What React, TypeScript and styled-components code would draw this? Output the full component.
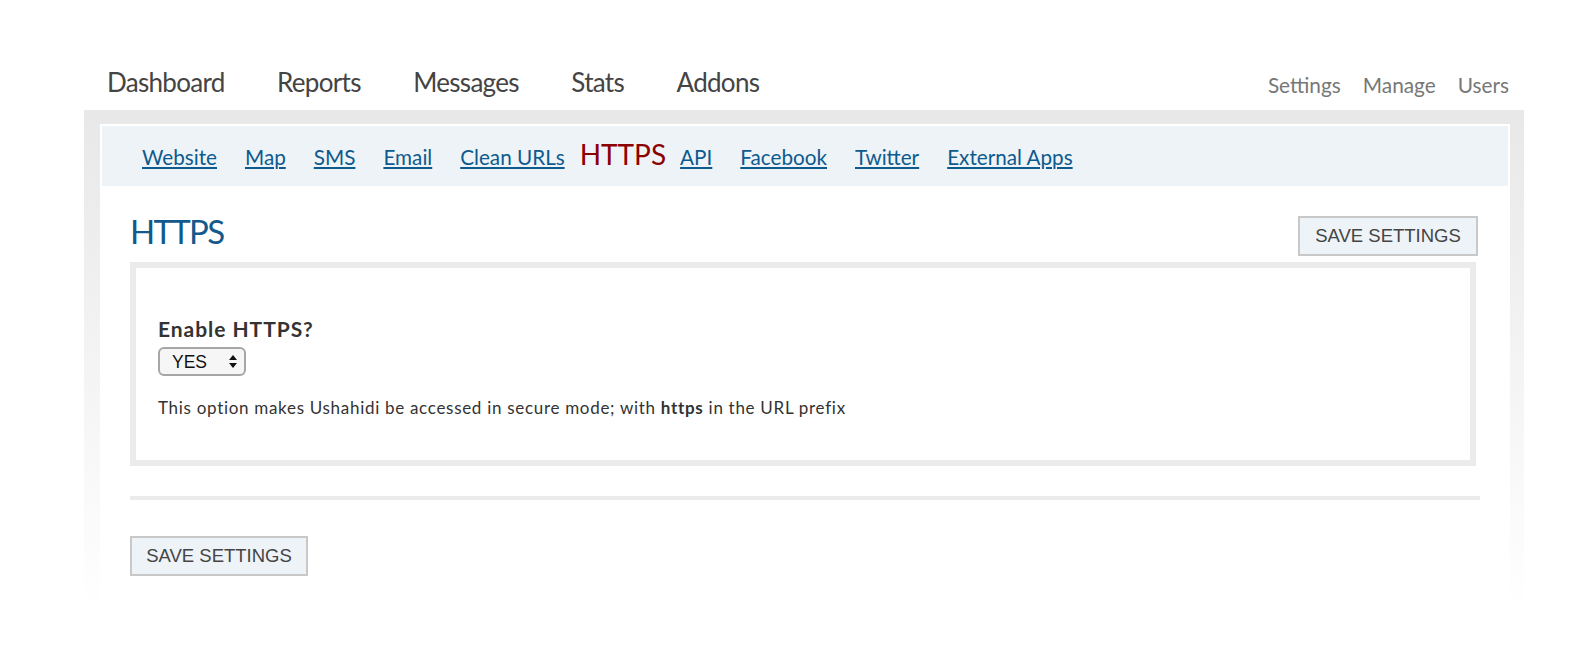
import React from "react";
import styled, { createGlobalStyle } from "styled-components";

const GlobalStyle = createGlobalStyle`
  html, body { margin: 0; padding: 0; background: #fff; }
  body { font-family: Lato, "Liberation Sans", sans-serif; color: #333; }
`;

const Page = styled.div`
  width: 1440px;
  margin-left: 84px;
  padding-top: 67px;
`;

const TopBar = styled.header`
  display: flex;
  justify-content: space-between;
  align-items: flex-end;
  padding: 0 15px 13px 23px;
`;

const MainNav = styled.nav`
  display: flex;
  gap: 52.5px;
`;

const MainLink = styled.a`
  font-size: 26px;
  line-height: 30px;
  letter-spacing: -0.7px;
  color: #444;
  text-decoration: none;
`;

const UtilNav = styled.nav`
  display: flex;
  gap: 22px;
`;

const UtilLink = styled.a`
  font-size: 20.8px;
  line-height: 24px;
  color: #777;
  text-decoration: none;
`;

const Frame = styled.div`
  height: 500px;
  box-sizing: border-box;
  padding: 14px 14px 0 16px;
  background: linear-gradient(#e8e8e8 0%, #ffffff 100%);
  display: flex;
`;

const Sheet = styled.div`
  flex: 1;
  background: #fff;
  padding: 2px;
  display: flex;
  flex-direction: column;
`;

const SubNav = styled.nav`
  height: 60px;
  box-sizing: border-box;
  background: #eef3f8;
  padding: 16px 0 0 26px;
  display: flex;
  align-items: baseline;
`;

const SubLink = styled.a`
  margin: 0 14px;
  font-size: 20.7px;
  line-height: 24px;
  color: #0d5a8e;
  text-decoration: underline;
  text-decoration-thickness: 2px;
  text-underline-offset: 2px;
`;

const SubCurrent = styled.span`
  margin: 0 0 0 1px;
  font-size: 28px;
  line-height: 24px;
  color: #8b0000;
`;

const Body = styled.section`
  padding: 30px 28px 0 28px;
`;

const HeadRow = styled.div`
  display: flex;
  justify-content: space-between;
  align-items: flex-start;
`;

const Title = styled.h1`
  margin: 0;
  font-size: 33px;
  line-height: 30px;
  letter-spacing: -1.7px;
  font-weight: 400;
  color: #13598c;
`;

const SaveButton = styled.button<{ $push?: number }>`
  width: ${(p) => (p.$push ? 180 : 178)}px;
  height: 40px;
  margin-right: ${(p) => p.$push ?? 0}px;
  box-sizing: border-box;
  border: 2px solid #c8c8c8;
  background: #eef3f8;
  color: #444;
  font-family: "Liberation Sans", Arial, sans-serif;
  font-size: 18.5px;
  padding: 0;
  cursor: pointer;
`;

const Panel = styled.div`
  margin: 6px 4px 0 0;
  height: 204px;
  box-sizing: border-box;
  border: 6px solid #ebebeb;
  padding: 49px 22px 0;
`;

const FieldLabel = styled.label`
  display: block;
  font-size: 21px;
  line-height: 23px;
  letter-spacing: 0.95px;
  font-weight: 700;
  color: #333;
`;

const SelectWrap = styled.div`
  position: relative;
  display: inline-block;
  margin-top: 7px;
`;

const Select = styled.select`
  appearance: none;
  -webkit-appearance: none;
  display: block;
  width: 88px;
  height: 29px;
  box-sizing: border-box;
  border: 2px solid #a6a6a6;
  border-radius: 6px;
  background: #f6f6f6;
  padding: 0 0 0 12px;
  font-family: "Liberation Sans", Arial, sans-serif;
  font-size: 17.5px;
  color: #111;
`;

const Arrows = styled.svg`
  position: absolute;
  right: 9px;
  top: 8px;
  pointer-events: none;
`;

const Help = styled.p`
  margin: 22px 0 0;
  font-size: 17px;
  line-height: 20px;
  letter-spacing: 0.7px;
  color: #333;
  b { font-weight: 700; }
`;

const Rule = styled.div`
  height: 4px;
  margin-top: 30px;
  background: #ebebeb;
`;

const Footer = styled.div`
  margin-top: 36px;
`;

export default function App() {
  return (
    <>
      <GlobalStyle />
      <Page>
        <TopBar>
          <MainNav>
            {["Dashboard", "Reports", "Messages", "Stats", "Addons"].map((t) => (
              <MainLink key={t} href="#">{t}</MainLink>
            ))}
          </MainNav>
          <UtilNav>
            {["Settings", "Manage", "Users"].map((t) => (
              <UtilLink key={t} href="#">{t}</UtilLink>
            ))}
          </UtilNav>
        </TopBar>
        <Frame>
          <Sheet>
            <SubNav>
              <SubLink href="#">Website</SubLink>
              <SubLink href="#">Map</SubLink>
              <SubLink href="#">SMS</SubLink>
              <SubLink href="#">Email</SubLink>
              <SubLink href="#">Clean URLs</SubLink>
              <SubCurrent>HTTPS</SubCurrent>
              <SubLink href="#">API</SubLink>
              <SubLink href="#">Facebook</SubLink>
              <SubLink href="#">Twitter</SubLink>
              <SubLink href="#">External Apps</SubLink>
            </SubNav>
            <Body>
              <HeadRow>
                <Title>HTTPS</Title>
                <SaveButton $push={2}>SAVE SETTINGS</SaveButton>
              </HeadRow>
              <Panel>
                <FieldLabel htmlFor="https">Enable HTTPS?</FieldLabel>
                <SelectWrap>
                  <Select id="https" defaultValue="1">
                    <option value="1">YES</option>
                    <option value="0">NO</option>
                  </Select>
                  <Arrows width="8" height="13" viewBox="0 0 8 13">
                    <path d="M4 0 L8 5 L0 5 Z" fill="#111" />
                    <path d="M0 8 L8 8 L4 13 Z" fill="#111" />
                  </Arrows>
                </SelectWrap>
                <Help>
                  This option makes Ushahidi be accessed in secure mode; with <b>https</b> in the URL prefix
                </Help>
              </Panel>
              <Rule />
              <Footer>
                <SaveButton>SAVE SETTINGS</SaveButton>
              </Footer>
            </Body>
          </Sheet>
        </Frame>
      </Page>
    </>
  );
}
